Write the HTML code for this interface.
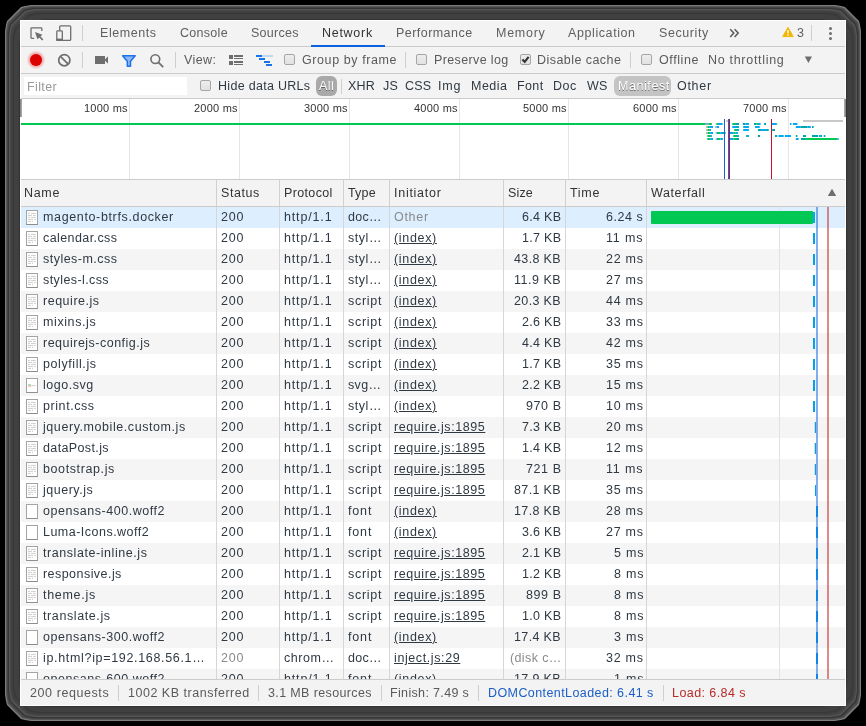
<!DOCTYPE html><html><head><meta charset="utf-8"><style>
html,body{margin:0;padding:0;width:866px;height:726px;overflow:hidden;background:#000;}
body{position:relative;font-family:"Liberation Sans",sans-serif;}
.r{position:absolute;}
.t{position:absolute;white-space:nowrap;will-change:transform;font-family:"Liberation Sans",sans-serif;}
#content{position:absolute;left:20px;top:20px;width:824px;height:684px;background:#f3f3f3;border:1px solid #fff;}
.cb{position:absolute;width:9px;height:9px;border:1px solid #a6a6a6;border-radius:2px;background:linear-gradient(#ededed,#e2e2e2);}
.fi{position:absolute;width:10px;height:13px;border:1px solid #a4a4a4;border-bottom-color:#8e8e8e;background:#fff;}
#grid{position:absolute;left:0;top:0;width:866px;height:679px;clip-path:inset(207px 20px 0 20px);}
</style></head><body><svg class="r" style="left:0;top:0" width="866" height="726"><polygon fill="#7d7d7d" points="31,5 835,5 841,6 845,7 859,21 860,25 861,31 861,695 860,701 859,705 845,719 841,720 835,721 31,721 25,720 21,719 7,705 6,701 5,695 5,31 6,25 7,21 21,7 25,6"/><polygon fill="#555555" points="32,6 834,6 840,7 844,8 858,22 859,26 860,32 860,694 859,700 858,704 844,718 840,719 834,720 32,720 26,719 22,718 8,704 7,700 6,694 6,32 7,26 8,22 22,8 26,7"/><polygon fill="#444444" points="33,7 833,7 839,8 843,9 857,23 858,27 859,33 859,693 858,699 857,703 843,717 839,718 833,719 33,719 27,718 23,717 9,703 8,699 7,693 7,33 8,27 9,23 23,9 27,8"/><polygon fill="#363636" points="34,8 832,8 838,9 842,10 856,24 857,28 858,34 858,692 857,698 856,702 842,716 838,717 832,718 34,718 28,717 24,716 10,702 9,698 8,692 8,34 9,28 10,24 24,10 28,9"/><polygon fill="#555555" points="35,9 831,9 837,10 841,11 855,25 856,29 857,35 857,691 856,697 855,701 841,715 837,716 831,717 35,717 29,716 25,715 11,701 10,697 9,691 9,35 10,29 11,25 25,11 29,10"/><polygon fill="#484848" points="36,10 830,10 836,11 840,12 854,26 855,30 856,36 856,690 855,696 854,700 840,714 836,715 830,716 36,716 30,715 26,714 12,700 11,696 10,690 10,36 11,30 12,26 26,12 30,11"/><polygon fill="#424242" points="37,11 829,11 835,12 839,13 853,27 854,31 855,37 855,689 854,695 853,699 839,713 835,714 829,715 37,715 31,714 27,713 13,699 12,695 11,689 11,37 12,31 13,27 27,13 31,12"/><polygon fill="#3e3e3e" points="38,12 828,12 834,13 838,14 852,28 853,32 854,38 854,688 853,694 852,698 838,712 834,713 828,714 38,714 32,713 28,712 14,698 13,694 12,688 12,38 13,32 14,28 28,14 32,13"/><polygon fill="#383838" points="39,13 827,13 833,14 837,15 851,29 852,33 853,39 853,687 852,693 851,697 837,711 833,712 827,713 39,713 33,712 29,711 15,697 14,693 13,687 13,39 14,33 15,29 29,15 33,14"/><polygon fill="#404040" points="40,14 826,14 832,15 836,16 850,30 851,34 852,40 852,686 851,692 850,696 836,710 832,711 826,712 40,712 34,711 30,710 16,696 15,692 14,686 14,40 15,34 16,30 30,16 34,15"/><polygon fill="#404040" points="41,15 825,15 831,16 835,17 849,31 850,35 851,41 851,685 850,691 849,695 835,709 831,710 825,711 41,711 35,710 31,709 17,695 16,691 15,685 15,41 16,35 17,31 31,17 35,16"/><polygon fill="#404040" points="42,16 824,16 830,17 834,18 848,32 849,36 850,42 850,684 849,690 848,694 834,708 830,709 824,710 42,710 36,709 32,708 18,694 17,690 16,684 16,42 17,36 18,32 32,18 36,17"/><polygon fill="#404040" points="43,17 823,17 829,18 833,19 847,33 848,37 849,43 849,683 848,689 847,693 833,707 829,708 823,709 43,709 37,708 33,707 19,693 18,689 17,683 17,43 18,37 19,33 33,19 37,18"/><polygon fill="#3e3e3e" points="44,18 822,18 828,19 832,20 846,34 847,38 848,44 848,682 847,688 846,692 832,706 828,707 822,708 44,708 38,707 34,706 20,692 19,688 18,682 18,44 19,38 20,34 34,20 38,19"/><polygon fill="#333333" points="45,19 821,19 827,20 831,21 845,35 846,39 847,45 847,681 846,687 845,691 831,705 827,706 821,707 45,707 39,706 35,705 21,691 20,687 19,681 19,45 20,39 21,35 35,21 39,20"/></svg>
<div id="content"></div>
<div class="r" style="left:21px;top:46px;width:824px;height:1px;background:#cbcbcb;"></div>
<div class="r" style="left:82px;top:25px;width:1px;height:16px;background:#cfcfcf;"></div>
<div class="t" style="top:26.17px;font-size:12.5px;line-height:15px;letter-spacing:0.548px;color:#5f5f5f;left:100.00px;">Elements</div>
<div class="t" style="top:26.17px;font-size:12.5px;line-height:15px;letter-spacing:0.297px;color:#5f5f5f;left:180.00px;">Console</div>
<div class="t" style="top:26.17px;font-size:12.5px;line-height:15px;letter-spacing:0.272px;color:#5f5f5f;left:251.00px;">Sources</div>
<div class="t" style="top:26.17px;font-size:12.5px;line-height:15px;letter-spacing:0.714px;color:#333333;left:322.00px;">Network</div>
<div class="t" style="top:26.17px;font-size:12.5px;line-height:15px;letter-spacing:0.453px;color:#5f5f5f;left:396.00px;">Performance</div>
<div class="t" style="top:26.17px;font-size:12.5px;line-height:15px;letter-spacing:0.738px;color:#5f5f5f;left:496.00px;">Memory</div>
<div class="t" style="top:26.17px;font-size:12.5px;line-height:15px;letter-spacing:0.590px;color:#5f5f5f;left:568.00px;">Application</div>
<div class="t" style="top:26.17px;font-size:12.5px;line-height:15px;letter-spacing:0.592px;color:#5f5f5f;left:659.00px;">Security</div>
<div class="r" style="left:311px;top:45px;width:74px;height:2px;background:#0b61df;"></div>
<div class="t" style="top:26.17px;font-size:12.5px;line-height:15px;letter-spacing:0.150px;color:#5f5f5f;left:797.00px;">3</div>
<div class="r" style="left:811px;top:25px;width:1px;height:16px;background:#cfcfcf;"></div>
<div class="r" style="left:829.0px;top:26.9px;width:3.2px;height:3.2px;border-radius:50%;background:#6e6e6e"></div>
<div class="r" style="left:829.0px;top:31.9px;width:3.2px;height:3.2px;border-radius:50%;background:#6e6e6e"></div>
<div class="r" style="left:829.0px;top:36.9px;width:3.2px;height:3.2px;border-radius:50%;background:#6e6e6e"></div>
<div class="r" style="left:21px;top:73px;width:824px;height:1px;background:#cbcbcb;"></div>
<svg class="r" style="left:26px;top:50px" width="20" height="20" viewBox="0 0 20 20"><defs><radialGradient id="rg"><stop offset="0.6" stop-color="#e33" stop-opacity=".45"/><stop offset="1" stop-color="#e33" stop-opacity="0"/></radialGradient></defs><circle cx="10" cy="9.9" r="9.5" fill="url(#rg)"/><circle cx="10" cy="9.9" r="6" fill="#dc0000"/></svg>
<div class="r" style="left:82px;top:52px;width:1px;height:16px;background:#cfcfcf;"></div>
<div class="r" style="left:175px;top:52px;width:1px;height:16px;background:#cfcfcf;"></div>
<div class="t" style="top:53.17px;font-size:12.5px;line-height:15px;letter-spacing:0.380px;color:#5a5a5a;left:184.00px;">View:</div>
<div class="cb" style="left:284px;top:54px"></div>
<div class="t" style="top:53.17px;font-size:12.5px;line-height:15px;letter-spacing:0.590px;color:#5a5a5a;left:301.50px;">Group by frame</div>
<div class="r" style="left:405px;top:52px;width:1px;height:16px;background:#cfcfcf;"></div>
<div class="cb" style="left:416px;top:54px"></div>
<div class="t" style="top:53.17px;font-size:12.5px;line-height:15px;letter-spacing:0.374px;color:#5a5a5a;left:433.60px;">Preserve log</div>
<div class="cb" style="left:520px;top:54px"></div><svg class="r" style="left:520px;top:54px" width="11" height="11" viewBox="0 0 11 11"><path d="M2.4 5.5l2.3 2.3 3.9-5" fill="none" stroke="#333" stroke-width="2.1"/></svg>
<div class="t" style="top:53.17px;font-size:12.5px;line-height:15px;letter-spacing:0.447px;color:#5a5a5a;left:537.00px;">Disable cache</div>
<div class="r" style="left:630px;top:52px;width:1px;height:16px;background:#cfcfcf;"></div>
<div class="cb" style="left:641px;top:54px"></div>
<div class="t" style="top:53.17px;font-size:12.5px;line-height:15px;letter-spacing:0.582px;color:#5a5a5a;left:658.70px;">Offline</div>
<div class="t" style="top:53.17px;font-size:12.5px;line-height:15px;letter-spacing:0.698px;color:#5a5a5a;left:708.20px;">No throttling</div>
<svg class="r" style="left:0;top:0" width="866" height="100" viewBox="0 0 866 100">
<path d="M34.2 38.3H31.6a0.6 0.6 0 0 1-0.6-0.6V28.5a0.6 0.6 0 0 1 0.6-0.6h9.6a0.6 0.6 0 0 1 0.6 0.6v2.6" fill="none" stroke="#6e6e6e" stroke-width="1.3"/>
<path d="M35.1 32.1L42.4 34.8 37.3 39.3z" fill="#6e6e6e"/><path d="M39 36.2L42.8 40" stroke="#6e6e6e" stroke-width="1.7"/>
<path d="M59.7 30.4V26.8a1 1 0 0 1 1-1h9a1 1 0 0 1 1 1V39.4a1 1 0 0 1-1 1H62.3" fill="none" stroke="#6e6e6e" stroke-width="1.3"/>
<rect x="56.8" y="30.9" width="5.5" height="9.5" rx="0.8" fill="none" stroke="#6e6e6e" stroke-width="1.3"/>
<rect x="56.2" y="38.6" width="6.6" height="2.3" fill="#6e6e6e"/>
<path d="M730.2 29.3l3.6 3.8-3.6 3.8M734.6 29.3l3.6 3.8-3.6 3.8" fill="none" stroke="#5a5a5a" stroke-width="1.5"/>
<path d="M788 27.3L793.3 36.6H782.7z" fill="#f2b600" stroke="#f2b600" stroke-width="0.9" stroke-linejoin="round"/>
<rect x="787.3" y="30" width="1.4" height="3.4" fill="#fff"/><rect x="787.3" y="34.2" width="1.4" height="1.4" fill="#fff"/>
<circle cx="64.3" cy="60.2" r="5.6" fill="none" stroke="#6e6e6e" stroke-width="1.7"/><path d="M60.4 56.3l7.8 7.8" stroke="#6e6e6e" stroke-width="1.7"/>
<rect x="95" y="56" width="10" height="8" fill="#6e6e6e"/><path d="M104.5 60L108 56.2V63.8z" fill="#6e6e6e"/>
<path d="M122.6 55.8h12.6L130.5 61.2v5H127.3v-5z" fill="#8fb6f5" stroke="#1a73e8" stroke-width="1.5" stroke-linejoin="round"/>
<circle cx="155.3" cy="59.1" r="4.4" fill="none" stroke="#6e6e6e" stroke-width="1.6"/><path d="M158.4 62.4l4.8 4.8" stroke="#6e6e6e" stroke-width="1.8"/>
<rect x="229" y="55" width="4" height="4" fill="#6e6e6e"/><rect x="229" y="61" width="4" height="4" fill="#6e6e6e"/>
<rect x="234" y="55" width="9" height="2" fill="#6e6e6e"/><rect x="234" y="58" width="9" height="1" fill="#6e6e6e"/>
<rect x="234" y="61" width="9" height="2" fill="#6e6e6e"/><rect x="234" y="64" width="9" height="1" fill="#6e6e6e"/>
<rect x="256" y="55" width="6" height="2" fill="#1a73e8"/><rect x="262" y="55" width="11" height="2" fill="#c3d7f3"/>
<rect x="259" y="58" width="6" height="2" fill="#1a73e8"/><rect x="264" y="61" width="6" height="2" fill="#1a73e8"/>
<rect x="266" y="64" width="6" height="2" fill="#1a73e8"/>
<path d="M804.8 56.5h7.2L808.4 63z" fill="#6e6e6e"/>
</svg>
<div class="r" style="left:21px;top:98px;width:824px;height:1px;background:#cbcbcb;"></div>
<div class="r" style="left:24px;top:77px;width:163px;height:18px;background:#ffffff;"></div>
<div class="t" style="top:80.17px;font-size:12.5px;line-height:15px;letter-spacing:0.389px;color:#9a9a9a;left:26.70px;">Filter</div>
<div class="cb" style="left:200px;top:80px"></div>
<div class="t" style="top:79.17px;font-size:12.5px;line-height:15px;letter-spacing:0.298px;color:#303942;left:217.70px;">Hide data URLs</div>
<div class="r" style="left:316px;top:76px;width:21px;height:20px;border-radius:6px;background:#a9a9a9"></div>
<div class="t" style="top:79.17px;font-size:12.5px;line-height:15px;letter-spacing:0.483px;color:#ffffff;left:318.50px;text-shadow:0 1px 0 rgba(0,0,0,.45);">All</div>
<div class="r" style="left:341px;top:79px;width:1px;height:15px;background:#cfcfcf;"></div>
<div class="t" style="top:79.17px;font-size:12.5px;line-height:15px;letter-spacing:0.150px;color:#303942;left:348.40px;">XHR</div>
<div class="t" style="top:79.17px;font-size:12.5px;line-height:15px;letter-spacing:0.150px;color:#303942;left:383.00px;">JS</div>
<div class="t" style="top:79.17px;font-size:12.5px;line-height:15px;letter-spacing:0.150px;color:#303942;left:404.70px;">CSS</div>
<div class="t" style="top:79.17px;font-size:12.5px;line-height:15px;letter-spacing:0.850px;color:#303942;left:438.30px;">Img</div>
<div class="t" style="top:79.17px;font-size:12.5px;line-height:15px;letter-spacing:0.505px;color:#303942;left:471.40px;">Media</div>
<div class="t" style="top:79.17px;font-size:12.5px;line-height:15px;letter-spacing:0.377px;color:#303942;left:517.10px;">Font</div>
<div class="t" style="top:79.17px;font-size:12.5px;line-height:15px;letter-spacing:0.472px;color:#303942;left:553.30px;">Doc</div>
<div class="t" style="top:79.17px;font-size:12.5px;line-height:15px;letter-spacing:0.150px;color:#303942;left:586.50px;">WS</div>
<div class="t" style="top:79.17px;font-size:12.5px;line-height:15px;letter-spacing:0.708px;color:#303942;left:677.20px;">Other</div>
<div class="r" style="left:614px;top:76px;width:57px;height:20px;border-radius:6px;background:#c4c4c4"></div>
<div class="t" style="top:79.17px;font-size:12.5px;line-height:15px;letter-spacing:0.569px;color:#ffffff;left:617.50px;text-shadow:0 1px 0 rgba(0,0,0,.45);">Manifest</div>
<div class="r" style="left:21px;top:99px;width:824px;height:80px;background:#ffffff;"></div>
<div class="r" style="left:21px;top:179px;width:824px;height:1px;background:#cbcbcb;"></div>
<div class="r" style="left:129px;top:99px;width:1px;height:80px;background:#e6e6e6;"></div>
<div class="t" style="top:101.69px;font-size:11px;line-height:13px;letter-spacing:0.227px;color:#333333;right:738.27px;">1000 ms</div>
<div class="r" style="left:239px;top:99px;width:1px;height:80px;background:#e6e6e6;"></div>
<div class="t" style="top:101.69px;font-size:11px;line-height:13px;letter-spacing:0.227px;color:#333333;right:628.27px;">2000 ms</div>
<div class="r" style="left:349px;top:99px;width:1px;height:80px;background:#e6e6e6;"></div>
<div class="t" style="top:101.69px;font-size:11px;line-height:13px;letter-spacing:0.227px;color:#333333;right:518.27px;">3000 ms</div>
<div class="r" style="left:459px;top:99px;width:1px;height:80px;background:#e6e6e6;"></div>
<div class="t" style="top:101.69px;font-size:11px;line-height:13px;letter-spacing:0.227px;color:#333333;right:408.27px;">4000 ms</div>
<div class="r" style="left:568px;top:99px;width:1px;height:80px;background:#e6e6e6;"></div>
<div class="t" style="top:101.69px;font-size:11px;line-height:13px;letter-spacing:0.227px;color:#333333;right:299.27px;">5000 ms</div>
<div class="r" style="left:678px;top:99px;width:1px;height:80px;background:#e6e6e6;"></div>
<div class="t" style="top:101.69px;font-size:11px;line-height:13px;letter-spacing:0.227px;color:#333333;right:189.27px;">6000 ms</div>
<div class="r" style="left:788px;top:99px;width:1px;height:80px;background:#e6e6e6;"></div>
<div class="t" style="top:101.69px;font-size:11px;line-height:13px;letter-spacing:0.227px;color:#333333;right:79.27px;">7000 ms</div>
<div class="r" style="left:20px;top:99px;width:1px;height:18px;background:#8c8c8c;"></div>
<div class="r" style="left:21px;top:99px;width:1px;height:18px;background:#a4a4a4;"></div>
<div class="r" style="left:21px;top:123px;width:685px;height:2px;background:#00c853;"></div>
<svg class="r" style="left:0;top:0" width="866" height="180" viewBox="0 0 866 180"><rect x="705" y="123" width="3.8" height="2" fill="#6fb5bd"/><rect x="708.8" y="123" width="3" height="2" fill="#00c853"/><rect x="715.7" y="123" width="0.9" height="2" fill="#b0b0b0"/><rect x="716.6" y="123" width="1.4" height="2" fill="#00c853"/><rect x="718" y="123" width="4.6" height="2" fill="#03a9f4"/><rect x="732.3" y="123" width="2.8" height="2" fill="#00c853"/><rect x="735.1" y="123" width="3.9" height="2" fill="#00a5a8"/><rect x="742.8" y="123" width="2.6" height="2" fill="#00a5a8"/><rect x="745.4" y="123" width="3.5" height="2" fill="#03a9f4"/><rect x="754" y="123" width="2.5" height="2" fill="#00a5a8"/><rect x="756.5" y="123" width="1.4" height="2" fill="#00c853"/><rect x="757.9" y="123" width="2.7" height="2" fill="#03a9f4"/><rect x="764.1" y="123" width="1.9" height="2" fill="#00a5a8"/><rect x="772" y="123" width="4.6" height="2" fill="#03a9f4"/><rect x="776.6" y="123" width="0.6" height="2" fill="#00a5a8"/><rect x="789.9" y="123" width="1.6" height="2" fill="#03a9f4"/><rect x="793" y="123" width="4.4" height="2" fill="#03a9f4"/><rect x="706.2" y="126" width="1.2" height="2" fill="#b0b0b0"/><rect x="707.4" y="126" width="1.8" height="2" fill="#00c853"/><rect x="709.2" y="126" width="3.8" height="2" fill="#03a9f4"/><rect x="715.2" y="126" width="1.4" height="2" fill="#b0b0b0"/><rect x="716.6" y="126" width="2.4" height="2" fill="#03a9f4"/><rect x="732.3" y="126" width="3.7" height="2" fill="#03a9f4"/><rect x="736" y="126" width="1" height="2" fill="#00c853"/><rect x="737" y="126" width="2" height="2" fill="#03a9f4"/><rect x="743" y="126" width="0.6" height="2" fill="#00c853"/><rect x="743.6" y="126" width="5.3" height="2" fill="#03a9f4"/><rect x="755" y="126" width="4.7" height="2" fill="#03a9f4"/><rect x="795.8" y="126" width="4.5" height="2" fill="#03a9f4"/><rect x="800.3" y="126" width="7.2" height="2" fill="#00a5a8"/><rect x="807.5" y="126" width="3.3" height="2" fill="#03a9f4"/><rect x="812" y="126" width="1.6" height="2" fill="#00a5a8"/><rect x="706.2" y="129" width="1.4" height="2" fill="#b0b0b0"/><rect x="707.6" y="129" width="2.1" height="2" fill="#00c853"/><rect x="709.7" y="129" width="1.2" height="2" fill="#00a5a8"/><rect x="734.2" y="129" width="2.8" height="2" fill="#00c853"/><rect x="737" y="129" width="2" height="2" fill="#03a9f4"/><rect x="743" y="129" width="0.6" height="2" fill="#00c853"/><rect x="743.6" y="129" width="5.3" height="2" fill="#03a9f4"/><rect x="757.9" y="129" width="3.2" height="2" fill="#00a5a8"/><rect x="761.1" y="129" width="5.1" height="2" fill="#03a9f4"/><rect x="766.2" y="129" width="2.5" height="2" fill="#00a5a8"/><rect x="772.2" y="129" width="2.8" height="2" fill="#00a5a8"/><rect x="706.2" y="132" width="1.4" height="2" fill="#b0b0b0"/><rect x="707.6" y="132" width="2.6" height="2" fill="#00c853"/><rect x="710.2" y="132" width="2.8" height="2" fill="#03a9f4"/><rect x="715.7" y="132" width="1.2" height="2" fill="#b0b0b0"/><rect x="716.9" y="132" width="1.1" height="2" fill="#03a9f4"/><rect x="718" y="132" width="2.3" height="2" fill="#00c853"/><rect x="720.3" y="132" width="2.8" height="2" fill="#03a9f4"/><rect x="723.1" y="132" width="2.5" height="2" fill="#00a5a8"/><rect x="730" y="132" width="3.3" height="2" fill="#03a9f4"/><rect x="733.3" y="132" width="2.3" height="2" fill="#00c853"/><rect x="735.6" y="132" width="2.3" height="2" fill="#03a9f4"/><rect x="706.9" y="135" width="0.7" height="2" fill="#b0b0b0"/><rect x="707.6" y="135" width="2.6" height="2" fill="#00c853"/><rect x="710.2" y="135" width="1.6" height="2" fill="#00a5a8"/><rect x="733.3" y="135" width="3.7" height="2" fill="#00c853"/><rect x="737" y="135" width="2" height="2" fill="#03a9f4"/><rect x="746.1" y="135" width="0.9" height="2" fill="#00c853"/><rect x="747" y="135" width="1.9" height="2" fill="#03a9f4"/><rect x="757.9" y="135" width="2.1" height="2" fill="#00a5a8"/><rect x="775" y="135" width="2.2" height="2" fill="#00a5a8"/><rect x="778.4" y="135" width="5.3" height="2" fill="#03a9f4"/><rect x="784.9" y="135" width="6.1" height="2" fill="#03a9f4"/><rect x="795.8" y="135" width="1.6" height="2" fill="#00a5a8"/><rect x="803" y="135" width="3" height="2" fill="#00a5a8"/><rect x="812" y="135" width="6" height="2" fill="#00a5a8"/><rect x="818.8" y="135" width="3.2" height="2" fill="#03a9f4"/><rect x="823.7" y="135" width="1.6" height="2" fill="#00a5a8"/><rect x="706.7" y="138" width="0.9" height="2" fill="#b0b0b0"/><rect x="707.6" y="138" width="3" height="2" fill="#00c853"/><rect x="710.6" y="138" width="2.4" height="2" fill="#03a9f4"/><rect x="715.7" y="138" width="1.2" height="2" fill="#b0b0b0"/><rect x="716.9" y="138" width="1.1" height="2" fill="#03a9f4"/><rect x="718" y="138" width="2.3" height="2" fill="#00c853"/><rect x="720.3" y="138" width="2.6" height="2" fill="#03a9f4"/><rect x="730" y="138" width="3.3" height="2" fill="#03a9f4"/><rect x="733.3" y="138" width="2.7" height="2" fill="#00c853"/><rect x="736" y="138" width="3" height="2" fill="#00a5a8"/><rect x="795.8" y="138" width="2.8" height="2" fill="#03a9f4"/><rect x="801" y="138" width="4" height="2" fill="#00a5a8"/><rect x="805" y="138" width="32.4" height="2" fill="#00c853"/><rect x="837.4" y="138" width="1.3" height="2" fill="#03a9f4"/></svg>
<div class="r" style="left:726px;top:120px;width:2px;height:2px;background:#c8c8c8;"></div>
<div class="r" style="left:724px;top:119px;width:1px;height:60px;background:#1565d8;"></div>
<div class="r" style="left:728px;top:119px;width:1px;height:60px;background:#1565d8;"></div>
<div class="r" style="left:729px;top:119px;width:1px;height:60px;background:#c8102e;"></div>
<div class="r" style="left:771px;top:119px;width:1px;height:60px;background:#c8102e;"></div>
<div class="r" style="left:803px;top:120px;width:40px;height:2px;background:#c8c8c8;"></div>
<div class="r" style="left:844px;top:99px;width:1px;height:18px;background:#a4a4a4;"></div>
<div class="r" style="left:845px;top:99px;width:1px;height:18px;background:#8c8c8c;"></div>
<div class="r" style="left:21px;top:180px;width:824px;height:26px;background:#f3f3f3;"></div>
<div class="r" style="left:21px;top:206px;width:824px;height:1px;background:#cbcbcb;"></div>
<div class="r" style="left:216px;top:180px;width:1px;height:26px;background:#d0d0d0;"></div>
<div class="r" style="left:279px;top:180px;width:1px;height:26px;background:#d0d0d0;"></div>
<div class="r" style="left:343px;top:180px;width:1px;height:26px;background:#d0d0d0;"></div>
<div class="r" style="left:389px;top:180px;width:1px;height:26px;background:#d0d0d0;"></div>
<div class="r" style="left:503px;top:180px;width:1px;height:26px;background:#d0d0d0;"></div>
<div class="r" style="left:565px;top:180px;width:1px;height:26px;background:#d0d0d0;"></div>
<div class="r" style="left:646px;top:180px;width:1px;height:26px;background:#d0d0d0;"></div>
<div class="t" style="top:186.17px;font-size:12.5px;line-height:15px;letter-spacing:0.693px;color:#333333;left:23.60px;">Name</div>
<div class="t" style="top:186.17px;font-size:12.5px;line-height:15px;letter-spacing:0.563px;color:#333333;left:221.00px;">Status</div>
<div class="t" style="top:186.17px;font-size:12.5px;line-height:15px;letter-spacing:0.358px;color:#333333;left:284.00px;">Protocol</div>
<div class="t" style="top:186.17px;font-size:12.5px;line-height:15px;letter-spacing:0.160px;color:#333333;left:348.00px;">Type</div>
<div class="t" style="top:186.17px;font-size:12.5px;line-height:15px;letter-spacing:0.734px;color:#333333;left:394.00px;">Initiator</div>
<div class="t" style="top:186.17px;font-size:12.5px;line-height:15px;letter-spacing:0.150px;color:#333333;left:508.00px;">Size</div>
<div class="t" style="top:186.17px;font-size:12.5px;line-height:15px;letter-spacing:0.682px;color:#333333;left:570.00px;">Time</div>
<div class="t" style="top:186.17px;font-size:12.5px;line-height:15px;letter-spacing:0.608px;color:#333333;left:651.00px;">Waterfall</div>
<svg class="r" style="left:827px;top:188px" width="10" height="9" viewBox="0 0 10 9"><path d="M5 0.8L9.2 8H0.8z" fill="#6e6e6e"/></svg>
<div id="grid">
<div class="r" style="left:21px;top:207px;width:824px;height:21px;background:#ddeeff;"></div>
<div class="r" style="left:21px;top:228px;width:824px;height:21px;background:#ffffff;"></div>
<div class="r" style="left:21px;top:249px;width:824px;height:21px;background:#f5f5f5;"></div>
<div class="r" style="left:21px;top:270px;width:824px;height:21px;background:#ffffff;"></div>
<div class="r" style="left:21px;top:291px;width:824px;height:21px;background:#f5f5f5;"></div>
<div class="r" style="left:21px;top:312px;width:824px;height:21px;background:#ffffff;"></div>
<div class="r" style="left:21px;top:333px;width:824px;height:21px;background:#f5f5f5;"></div>
<div class="r" style="left:21px;top:354px;width:824px;height:21px;background:#ffffff;"></div>
<div class="r" style="left:21px;top:375px;width:824px;height:21px;background:#f5f5f5;"></div>
<div class="r" style="left:21px;top:396px;width:824px;height:21px;background:#ffffff;"></div>
<div class="r" style="left:21px;top:417px;width:824px;height:21px;background:#f5f5f5;"></div>
<div class="r" style="left:21px;top:438px;width:824px;height:21px;background:#ffffff;"></div>
<div class="r" style="left:21px;top:459px;width:824px;height:21px;background:#f5f5f5;"></div>
<div class="r" style="left:21px;top:480px;width:824px;height:21px;background:#ffffff;"></div>
<div class="r" style="left:21px;top:501px;width:824px;height:21px;background:#f5f5f5;"></div>
<div class="r" style="left:21px;top:522px;width:824px;height:21px;background:#ffffff;"></div>
<div class="r" style="left:21px;top:543px;width:824px;height:21px;background:#f5f5f5;"></div>
<div class="r" style="left:21px;top:564px;width:824px;height:21px;background:#ffffff;"></div>
<div class="r" style="left:21px;top:585px;width:824px;height:21px;background:#f5f5f5;"></div>
<div class="r" style="left:21px;top:606px;width:824px;height:21px;background:#ffffff;"></div>
<div class="r" style="left:21px;top:627px;width:824px;height:21px;background:#f5f5f5;"></div>
<div class="r" style="left:21px;top:648px;width:824px;height:21px;background:#ffffff;"></div>
<div class="r" style="left:21px;top:669px;width:824px;height:21px;background:#f5f5f5;"></div>
<div class="r" style="left:216px;top:207px;width:1px;height:472px;background:#d6d6d6;"></div>
<div class="r" style="left:279px;top:207px;width:1px;height:472px;background:#d6d6d6;"></div>
<div class="r" style="left:343px;top:207px;width:1px;height:472px;background:#d6d6d6;"></div>
<div class="r" style="left:389px;top:207px;width:1px;height:472px;background:#d6d6d6;"></div>
<div class="r" style="left:503px;top:207px;width:1px;height:472px;background:#d6d6d6;"></div>
<div class="r" style="left:565px;top:207px;width:1px;height:472px;background:#d6d6d6;"></div>
<div class="r" style="left:646px;top:207px;width:1px;height:472px;background:#d6d6d6;"></div>
<div class="r" style="left:779px;top:207px;width:1px;height:472px;background:#e2e2e2;"></div>
<div class="fi" style="left:26px;top:210px"></div>
<svg class="r" style="left:26px;top:210px" width="12" height="15" viewBox="0 0 12 15"><path d="M2 3.4h2M5 3.4h4.8M2 5.4h4M7 5.4h2.8M2 7.4h2M5 7.4h4.8M2 9.4h5M8 9.4h1.8M2 11.4h3M6 11.4h1" stroke="#cdcdcd" stroke-width="1"/></svg>
<div class="t" style="top:210.17px;font-size:12.5px;line-height:15px;letter-spacing:0.639px;color:#303942;left:42.60px;">magento-btrfs.docker</div>
<div class="t" style="top:210.17px;font-size:12.5px;line-height:15px;letter-spacing:0.850px;color:#303942;left:221.00px;">200</div>
<div class="t" style="top:210.17px;font-size:12.5px;line-height:15px;letter-spacing:0.850px;color:#303942;left:283.50px;">http/1.1</div>
<div class="t" style="top:210.17px;font-size:12.5px;line-height:15px;letter-spacing:0.303px;color:#303942;left:348.00px;">doc…</div>
<div class="t" style="top:210.17px;font-size:12.5px;line-height:15px;letter-spacing:0.708px;color:#8a8a8a;left:394.00px;">Other</div>
<div class="t" style="top:210.17px;font-size:12.5px;line-height:15px;letter-spacing:0.298px;color:#303942;right:304.70px;">6.4 KB</div>
<div class="t" style="top:210.17px;font-size:12.5px;line-height:15px;letter-spacing:0.550px;color:#303942;right:222.45px;">6.24 s</div>
<div class="r" style="left:651px;top:211px;width:162px;height:13px;background:#00c853;border-radius:1px;"></div>
<div class="r" style="left:813px;top:212px;width:1.5px;height:11px;background:#03a9f4;"></div>
<div class="fi" style="left:26px;top:231px"></div>
<svg class="r" style="left:26px;top:231px" width="12" height="15" viewBox="0 0 12 15"><path d="M2 3.4h2M5 3.4h4.8M2 5.4h4M7 5.4h2.8M2 7.4h2M5 7.4h4.8M2 9.4h5M8 9.4h1.8M2 11.4h3M6 11.4h1" stroke="#cdcdcd" stroke-width="1"/></svg>
<div class="t" style="top:231.17px;font-size:12.5px;line-height:15px;letter-spacing:0.412px;color:#303942;left:42.60px;">calendar.css</div>
<div class="t" style="top:231.17px;font-size:12.5px;line-height:15px;letter-spacing:0.850px;color:#303942;left:221.00px;">200</div>
<div class="t" style="top:231.17px;font-size:12.5px;line-height:15px;letter-spacing:0.850px;color:#303942;left:283.50px;">http/1.1</div>
<div class="t" style="top:231.17px;font-size:12.5px;line-height:15px;letter-spacing:0.535px;color:#303942;left:348.00px;">styl…</div>
<div class="t" style="top:231.17px;font-size:12.5px;line-height:15px;letter-spacing:0.672px;color:#303942;left:394.00px;text-decoration:underline;">(index)</div>
<div class="t" style="top:231.17px;font-size:12.5px;line-height:15px;letter-spacing:0.298px;color:#303942;right:304.70px;">1.7 KB</div>
<div class="t" style="top:231.17px;font-size:12.5px;line-height:15px;letter-spacing:0.850px;color:#303942;right:222.15px;">11 ms</div>
<div class="r" style="left:812.5px;top:233px;width:0.8px;height:11px;background:#d8d8d8;"></div>
<div class="r" style="left:813.3px;top:233px;width:2.2px;height:11px;background:#03a0f0;"></div>
<div class="fi" style="left:26px;top:252px"></div>
<svg class="r" style="left:26px;top:252px" width="12" height="15" viewBox="0 0 12 15"><path d="M2 3.4h2M5 3.4h4.8M2 5.4h4M7 5.4h2.8M2 7.4h2M5 7.4h4.8M2 9.4h5M8 9.4h1.8M2 11.4h3M6 11.4h1" stroke="#cdcdcd" stroke-width="1"/></svg>
<div class="t" style="top:252.17px;font-size:12.5px;line-height:15px;letter-spacing:0.473px;color:#303942;left:42.60px;">styles-m.css</div>
<div class="t" style="top:252.17px;font-size:12.5px;line-height:15px;letter-spacing:0.850px;color:#303942;left:221.00px;">200</div>
<div class="t" style="top:252.17px;font-size:12.5px;line-height:15px;letter-spacing:0.850px;color:#303942;left:283.50px;">http/1.1</div>
<div class="t" style="top:252.17px;font-size:12.5px;line-height:15px;letter-spacing:0.535px;color:#303942;left:348.00px;">styl…</div>
<div class="t" style="top:252.17px;font-size:12.5px;line-height:15px;letter-spacing:0.672px;color:#303942;left:394.00px;text-decoration:underline;">(index)</div>
<div class="t" style="top:252.17px;font-size:12.5px;line-height:15px;letter-spacing:0.364px;color:#303942;right:304.64px;">43.8 KB</div>
<div class="t" style="top:252.17px;font-size:12.5px;line-height:15px;letter-spacing:0.749px;color:#303942;right:222.25px;">22 ms</div>
<div class="r" style="left:812.5px;top:254px;width:0.8px;height:11px;background:#d8d8d8;"></div>
<div class="r" style="left:813.3px;top:254px;width:2.2px;height:11px;background:#03a0f0;"></div>
<div class="fi" style="left:26px;top:273px"></div>
<svg class="r" style="left:26px;top:273px" width="12" height="15" viewBox="0 0 12 15"><path d="M2 3.4h2M5 3.4h4.8M2 5.4h4M7 5.4h2.8M2 7.4h2M5 7.4h4.8M2 9.4h5M8 9.4h1.8M2 11.4h3M6 11.4h1" stroke="#cdcdcd" stroke-width="1"/></svg>
<div class="t" style="top:273.17px;font-size:12.5px;line-height:15px;letter-spacing:0.407px;color:#303942;left:42.60px;">styles-l.css</div>
<div class="t" style="top:273.17px;font-size:12.5px;line-height:15px;letter-spacing:0.850px;color:#303942;left:221.00px;">200</div>
<div class="t" style="top:273.17px;font-size:12.5px;line-height:15px;letter-spacing:0.850px;color:#303942;left:283.50px;">http/1.1</div>
<div class="t" style="top:273.17px;font-size:12.5px;line-height:15px;letter-spacing:0.535px;color:#303942;left:348.00px;">styl…</div>
<div class="t" style="top:273.17px;font-size:12.5px;line-height:15px;letter-spacing:0.672px;color:#303942;left:394.00px;text-decoration:underline;">(index)</div>
<div class="t" style="top:273.17px;font-size:12.5px;line-height:15px;letter-spacing:0.518px;color:#303942;right:304.48px;">11.9 KB</div>
<div class="t" style="top:273.17px;font-size:12.5px;line-height:15px;letter-spacing:0.749px;color:#303942;right:222.25px;">27 ms</div>
<div class="r" style="left:812.5px;top:275px;width:0.8px;height:11px;background:#d8d8d8;"></div>
<div class="r" style="left:813.3px;top:275px;width:2.2px;height:11px;background:#03a0f0;"></div>
<div class="fi" style="left:26px;top:294px"></div>
<svg class="r" style="left:26px;top:294px" width="12" height="15" viewBox="0 0 12 15"><path d="M2 3.4h2M5 3.4h4.8M2 5.4h4M7 5.4h2.8M2 7.4h2M5 7.4h4.8M2 9.4h5M8 9.4h1.8M2 11.4h3M6 11.4h1" stroke="#cdcdcd" stroke-width="1"/></svg>
<div class="t" style="top:294.17px;font-size:12.5px;line-height:15px;letter-spacing:0.519px;color:#303942;left:42.60px;">require.js</div>
<div class="t" style="top:294.17px;font-size:12.5px;line-height:15px;letter-spacing:0.850px;color:#303942;left:221.00px;">200</div>
<div class="t" style="top:294.17px;font-size:12.5px;line-height:15px;letter-spacing:0.850px;color:#303942;left:283.50px;">http/1.1</div>
<div class="t" style="top:294.17px;font-size:12.5px;line-height:15px;letter-spacing:0.715px;color:#303942;left:348.00px;">script</div>
<div class="t" style="top:294.17px;font-size:12.5px;line-height:15px;letter-spacing:0.672px;color:#303942;left:394.00px;text-decoration:underline;">(index)</div>
<div class="t" style="top:294.17px;font-size:12.5px;line-height:15px;letter-spacing:0.364px;color:#303942;right:304.64px;">20.3 KB</div>
<div class="t" style="top:294.17px;font-size:12.5px;line-height:15px;letter-spacing:0.749px;color:#303942;right:222.25px;">44 ms</div>
<div class="r" style="left:812.5px;top:296px;width:0.8px;height:11px;background:#d8d8d8;"></div>
<div class="r" style="left:813.3px;top:296px;width:2.2px;height:11px;background:#03a0f0;"></div>
<div class="fi" style="left:26px;top:315px"></div>
<svg class="r" style="left:26px;top:315px" width="12" height="15" viewBox="0 0 12 15"><path d="M2 3.4h2M5 3.4h4.8M2 5.4h4M7 5.4h2.8M2 7.4h2M5 7.4h4.8M2 9.4h5M8 9.4h1.8M2 11.4h3M6 11.4h1" stroke="#cdcdcd" stroke-width="1"/></svg>
<div class="t" style="top:315.17px;font-size:12.5px;line-height:15px;letter-spacing:0.598px;color:#303942;left:42.60px;">mixins.js</div>
<div class="t" style="top:315.17px;font-size:12.5px;line-height:15px;letter-spacing:0.850px;color:#303942;left:221.00px;">200</div>
<div class="t" style="top:315.17px;font-size:12.5px;line-height:15px;letter-spacing:0.850px;color:#303942;left:283.50px;">http/1.1</div>
<div class="t" style="top:315.17px;font-size:12.5px;line-height:15px;letter-spacing:0.715px;color:#303942;left:348.00px;">script</div>
<div class="t" style="top:315.17px;font-size:12.5px;line-height:15px;letter-spacing:0.672px;color:#303942;left:394.00px;text-decoration:underline;">(index)</div>
<div class="t" style="top:315.17px;font-size:12.5px;line-height:15px;letter-spacing:0.298px;color:#303942;right:304.70px;">2.6 KB</div>
<div class="t" style="top:315.17px;font-size:12.5px;line-height:15px;letter-spacing:0.749px;color:#303942;right:222.25px;">33 ms</div>
<div class="r" style="left:812.5px;top:317px;width:0.8px;height:11px;background:#d8d8d8;"></div>
<div class="r" style="left:813.3px;top:317px;width:2.2px;height:11px;background:#03a0f0;"></div>
<div class="fi" style="left:26px;top:336px"></div>
<svg class="r" style="left:26px;top:336px" width="12" height="15" viewBox="0 0 12 15"><path d="M2 3.4h2M5 3.4h4.8M2 5.4h4M7 5.4h2.8M2 7.4h2M5 7.4h4.8M2 9.4h5M8 9.4h1.8M2 11.4h3M6 11.4h1" stroke="#cdcdcd" stroke-width="1"/></svg>
<div class="t" style="top:336.17px;font-size:12.5px;line-height:15px;letter-spacing:0.487px;color:#303942;left:42.60px;">requirejs-config.js</div>
<div class="t" style="top:336.17px;font-size:12.5px;line-height:15px;letter-spacing:0.850px;color:#303942;left:221.00px;">200</div>
<div class="t" style="top:336.17px;font-size:12.5px;line-height:15px;letter-spacing:0.850px;color:#303942;left:283.50px;">http/1.1</div>
<div class="t" style="top:336.17px;font-size:12.5px;line-height:15px;letter-spacing:0.715px;color:#303942;left:348.00px;">script</div>
<div class="t" style="top:336.17px;font-size:12.5px;line-height:15px;letter-spacing:0.672px;color:#303942;left:394.00px;text-decoration:underline;">(index)</div>
<div class="t" style="top:336.17px;font-size:12.5px;line-height:15px;letter-spacing:0.298px;color:#303942;right:304.70px;">4.4 KB</div>
<div class="t" style="top:336.17px;font-size:12.5px;line-height:15px;letter-spacing:0.749px;color:#303942;right:222.25px;">42 ms</div>
<div class="r" style="left:812.5px;top:338px;width:0.8px;height:11px;background:#d8d8d8;"></div>
<div class="r" style="left:813.3px;top:338px;width:2.2px;height:11px;background:#03a0f0;"></div>
<div class="fi" style="left:26px;top:357px"></div>
<svg class="r" style="left:26px;top:357px" width="12" height="15" viewBox="0 0 12 15"><path d="M2 3.4h2M5 3.4h4.8M2 5.4h4M7 5.4h2.8M2 7.4h2M5 7.4h4.8M2 9.4h5M8 9.4h1.8M2 11.4h3M6 11.4h1" stroke="#cdcdcd" stroke-width="1"/></svg>
<div class="t" style="top:357.17px;font-size:12.5px;line-height:15px;letter-spacing:0.578px;color:#303942;left:42.60px;">polyfill.js</div>
<div class="t" style="top:357.17px;font-size:12.5px;line-height:15px;letter-spacing:0.850px;color:#303942;left:221.00px;">200</div>
<div class="t" style="top:357.17px;font-size:12.5px;line-height:15px;letter-spacing:0.850px;color:#303942;left:283.50px;">http/1.1</div>
<div class="t" style="top:357.17px;font-size:12.5px;line-height:15px;letter-spacing:0.715px;color:#303942;left:348.00px;">script</div>
<div class="t" style="top:357.17px;font-size:12.5px;line-height:15px;letter-spacing:0.672px;color:#303942;left:394.00px;text-decoration:underline;">(index)</div>
<div class="t" style="top:357.17px;font-size:12.5px;line-height:15px;letter-spacing:0.298px;color:#303942;right:304.70px;">1.7 KB</div>
<div class="t" style="top:357.17px;font-size:12.5px;line-height:15px;letter-spacing:0.749px;color:#303942;right:222.25px;">35 ms</div>
<div class="r" style="left:812.5px;top:359px;width:0.8px;height:11px;background:#d8d8d8;"></div>
<div class="r" style="left:813.3px;top:359px;width:2.2px;height:11px;background:#03a0f0;"></div>
<div class="fi" style="left:26px;top:378px"></div>
<svg class="r" style="left:26px;top:378px" width="12" height="15" viewBox="0 0 12 15"><rect x="2" y="6.2" width="1.4" height="1.4" fill="#8cc4f0"/><rect x="3.4" y="6.2" width="1.4" height="1.4" fill="#8fd08f"/><rect x="2" y="7.6" width="1.4" height="1.4" fill="#f5e08a"/><rect x="3.4" y="7.6" width="1.4" height="1.4" fill="#f0a090"/><path d="M5.4 7.6h2.2M8.2 7.6h1.4" stroke="#b8b8b8" stroke-width="0.8"/></svg>
<div class="t" style="top:378.17px;font-size:12.5px;line-height:15px;letter-spacing:0.526px;color:#303942;left:42.60px;">logo.svg</div>
<div class="t" style="top:378.17px;font-size:12.5px;line-height:15px;letter-spacing:0.850px;color:#303942;left:221.00px;">200</div>
<div class="t" style="top:378.17px;font-size:12.5px;line-height:15px;letter-spacing:0.850px;color:#303942;left:283.50px;">http/1.1</div>
<div class="t" style="top:378.17px;font-size:12.5px;line-height:15px;letter-spacing:0.344px;color:#303942;left:348.00px;">svg…</div>
<div class="t" style="top:378.17px;font-size:12.5px;line-height:15px;letter-spacing:0.672px;color:#303942;left:394.00px;text-decoration:underline;">(index)</div>
<div class="t" style="top:378.17px;font-size:12.5px;line-height:15px;letter-spacing:0.298px;color:#303942;right:304.70px;">2.2 KB</div>
<div class="t" style="top:378.17px;font-size:12.5px;line-height:15px;letter-spacing:0.749px;color:#303942;right:222.25px;">15 ms</div>
<div class="r" style="left:812.5px;top:380px;width:0.8px;height:11px;background:#d8d8d8;"></div>
<div class="r" style="left:813.3px;top:380px;width:2.2px;height:11px;background:#03a0f0;"></div>
<div class="fi" style="left:26px;top:399px"></div>
<svg class="r" style="left:26px;top:399px" width="12" height="15" viewBox="0 0 12 15"><path d="M2 3.4h2M5 3.4h4.8M2 5.4h4M7 5.4h2.8M2 7.4h2M5 7.4h4.8M2 9.4h5M8 9.4h1.8M2 11.4h3M6 11.4h1" stroke="#cdcdcd" stroke-width="1"/></svg>
<div class="t" style="top:399.17px;font-size:12.5px;line-height:15px;letter-spacing:0.572px;color:#303942;left:42.60px;">print.css</div>
<div class="t" style="top:399.17px;font-size:12.5px;line-height:15px;letter-spacing:0.850px;color:#303942;left:221.00px;">200</div>
<div class="t" style="top:399.17px;font-size:12.5px;line-height:15px;letter-spacing:0.850px;color:#303942;left:283.50px;">http/1.1</div>
<div class="t" style="top:399.17px;font-size:12.5px;line-height:15px;letter-spacing:0.535px;color:#303942;left:348.00px;">styl…</div>
<div class="t" style="top:399.17px;font-size:12.5px;line-height:15px;letter-spacing:0.672px;color:#303942;left:394.00px;text-decoration:underline;">(index)</div>
<div class="t" style="top:399.17px;font-size:12.5px;line-height:15px;letter-spacing:0.576px;color:#303942;right:304.42px;">970 B</div>
<div class="t" style="top:399.17px;font-size:12.5px;line-height:15px;letter-spacing:0.749px;color:#303942;right:222.25px;">10 ms</div>
<div class="r" style="left:812.5px;top:401px;width:0.8px;height:11px;background:#d8d8d8;"></div>
<div class="r" style="left:813.3px;top:401px;width:2.2px;height:11px;background:#03a0f0;"></div>
<div class="fi" style="left:26px;top:420px"></div>
<svg class="r" style="left:26px;top:420px" width="12" height="15" viewBox="0 0 12 15"><path d="M2 3.4h2M5 3.4h4.8M2 5.4h4M7 5.4h2.8M2 7.4h2M5 7.4h4.8M2 9.4h5M8 9.4h1.8M2 11.4h3M6 11.4h1" stroke="#cdcdcd" stroke-width="1"/></svg>
<div class="t" style="top:420.17px;font-size:12.5px;line-height:15px;letter-spacing:0.570px;color:#303942;left:42.60px;">jquery.mobile.custom.js</div>
<div class="t" style="top:420.17px;font-size:12.5px;line-height:15px;letter-spacing:0.850px;color:#303942;left:221.00px;">200</div>
<div class="t" style="top:420.17px;font-size:12.5px;line-height:15px;letter-spacing:0.850px;color:#303942;left:283.50px;">http/1.1</div>
<div class="t" style="top:420.17px;font-size:12.5px;line-height:15px;letter-spacing:0.715px;color:#303942;left:348.00px;">script</div>
<div class="t" style="top:420.17px;font-size:12.5px;line-height:15px;letter-spacing:0.572px;color:#303942;left:394.00px;text-decoration:underline;">require.js:1895</div>
<div class="t" style="top:420.17px;font-size:12.5px;line-height:15px;letter-spacing:0.298px;color:#303942;right:304.70px;">7.3 KB</div>
<div class="t" style="top:420.17px;font-size:12.5px;line-height:15px;letter-spacing:0.749px;color:#303942;right:222.25px;">20 ms</div>
<div class="r" style="left:813.8px;top:422px;width:0.8px;height:11px;background:#d8d8d8;"></div>
<div class="r" style="left:814.6px;top:422px;width:1.8px;height:11px;background:#03a0f0;"></div>
<div class="fi" style="left:26px;top:441px"></div>
<svg class="r" style="left:26px;top:441px" width="12" height="15" viewBox="0 0 12 15"><path d="M2 3.4h2M5 3.4h4.8M2 5.4h4M7 5.4h2.8M2 7.4h2M5 7.4h4.8M2 9.4h5M8 9.4h1.8M2 11.4h3M6 11.4h1" stroke="#cdcdcd" stroke-width="1"/></svg>
<div class="t" style="top:441.17px;font-size:12.5px;line-height:15px;letter-spacing:0.371px;color:#303942;left:42.60px;">dataPost.js</div>
<div class="t" style="top:441.17px;font-size:12.5px;line-height:15px;letter-spacing:0.850px;color:#303942;left:221.00px;">200</div>
<div class="t" style="top:441.17px;font-size:12.5px;line-height:15px;letter-spacing:0.850px;color:#303942;left:283.50px;">http/1.1</div>
<div class="t" style="top:441.17px;font-size:12.5px;line-height:15px;letter-spacing:0.715px;color:#303942;left:348.00px;">script</div>
<div class="t" style="top:441.17px;font-size:12.5px;line-height:15px;letter-spacing:0.572px;color:#303942;left:394.00px;text-decoration:underline;">require.js:1895</div>
<div class="t" style="top:441.17px;font-size:12.5px;line-height:15px;letter-spacing:0.298px;color:#303942;right:304.70px;">1.4 KB</div>
<div class="t" style="top:441.17px;font-size:12.5px;line-height:15px;letter-spacing:0.749px;color:#303942;right:222.25px;">12 ms</div>
<div class="r" style="left:813.8px;top:443px;width:0.8px;height:11px;background:#d8d8d8;"></div>
<div class="r" style="left:814.6px;top:443px;width:1.8px;height:11px;background:#03a0f0;"></div>
<div class="fi" style="left:26px;top:462px"></div>
<svg class="r" style="left:26px;top:462px" width="12" height="15" viewBox="0 0 12 15"><path d="M2 3.4h2M5 3.4h4.8M2 5.4h4M7 5.4h2.8M2 7.4h2M5 7.4h4.8M2 9.4h5M8 9.4h1.8M2 11.4h3M6 11.4h1" stroke="#cdcdcd" stroke-width="1"/></svg>
<div class="t" style="top:462.17px;font-size:12.5px;line-height:15px;letter-spacing:0.606px;color:#303942;left:42.60px;">bootstrap.js</div>
<div class="t" style="top:462.17px;font-size:12.5px;line-height:15px;letter-spacing:0.850px;color:#303942;left:221.00px;">200</div>
<div class="t" style="top:462.17px;font-size:12.5px;line-height:15px;letter-spacing:0.850px;color:#303942;left:283.50px;">http/1.1</div>
<div class="t" style="top:462.17px;font-size:12.5px;line-height:15px;letter-spacing:0.715px;color:#303942;left:348.00px;">script</div>
<div class="t" style="top:462.17px;font-size:12.5px;line-height:15px;letter-spacing:0.572px;color:#303942;left:394.00px;text-decoration:underline;">require.js:1895</div>
<div class="t" style="top:462.17px;font-size:12.5px;line-height:15px;letter-spacing:0.576px;color:#303942;right:304.42px;">721 B</div>
<div class="t" style="top:462.17px;font-size:12.5px;line-height:15px;letter-spacing:0.850px;color:#303942;right:222.15px;">11 ms</div>
<div class="r" style="left:813.8px;top:464px;width:0.8px;height:11px;background:#d8d8d8;"></div>
<div class="r" style="left:814.6px;top:464px;width:1.8px;height:11px;background:#03a0f0;"></div>
<div class="fi" style="left:26px;top:483px"></div>
<svg class="r" style="left:26px;top:483px" width="12" height="15" viewBox="0 0 12 15"><path d="M2 3.4h2M5 3.4h4.8M2 5.4h4M7 5.4h2.8M2 7.4h2M5 7.4h4.8M2 9.4h5M8 9.4h1.8M2 11.4h3M6 11.4h1" stroke="#cdcdcd" stroke-width="1"/></svg>
<div class="t" style="top:483.17px;font-size:12.5px;line-height:15px;letter-spacing:0.509px;color:#303942;left:42.60px;">jquery.js</div>
<div class="t" style="top:483.17px;font-size:12.5px;line-height:15px;letter-spacing:0.850px;color:#303942;left:221.00px;">200</div>
<div class="t" style="top:483.17px;font-size:12.5px;line-height:15px;letter-spacing:0.850px;color:#303942;left:283.50px;">http/1.1</div>
<div class="t" style="top:483.17px;font-size:12.5px;line-height:15px;letter-spacing:0.715px;color:#303942;left:348.00px;">script</div>
<div class="t" style="top:483.17px;font-size:12.5px;line-height:15px;letter-spacing:0.572px;color:#303942;left:394.00px;text-decoration:underline;">require.js:1895</div>
<div class="t" style="top:483.17px;font-size:12.5px;line-height:15px;letter-spacing:0.364px;color:#303942;right:304.64px;">87.1 KB</div>
<div class="t" style="top:483.17px;font-size:12.5px;line-height:15px;letter-spacing:0.749px;color:#303942;right:222.25px;">35 ms</div>
<div class="r" style="left:815.3px;top:485px;width:1.2px;height:11px;background:#03a0f0;"></div>
<div class="fi" style="left:26px;top:504px"></div>
<div class="t" style="top:504.17px;font-size:12.5px;line-height:15px;letter-spacing:0.542px;color:#303942;left:42.60px;">opensans-400.woff2</div>
<div class="t" style="top:504.17px;font-size:12.5px;line-height:15px;letter-spacing:0.850px;color:#303942;left:221.00px;">200</div>
<div class="t" style="top:504.17px;font-size:12.5px;line-height:15px;letter-spacing:0.850px;color:#303942;left:283.50px;">http/1.1</div>
<div class="t" style="top:504.17px;font-size:12.5px;line-height:15px;letter-spacing:0.850px;color:#303942;left:348.00px;">font</div>
<div class="t" style="top:504.17px;font-size:12.5px;line-height:15px;letter-spacing:0.672px;color:#303942;left:394.00px;text-decoration:underline;">(index)</div>
<div class="t" style="top:504.17px;font-size:12.5px;line-height:15px;letter-spacing:0.364px;color:#303942;right:304.64px;">17.8 KB</div>
<div class="t" style="top:504.17px;font-size:12.5px;line-height:15px;letter-spacing:0.749px;color:#303942;right:222.25px;">28 ms</div>
<div class="r" style="left:816px;top:506px;width:2px;height:11px;background:#03a0f0;"></div>
<div class="fi" style="left:26px;top:525px"></div>
<div class="t" style="top:525.17px;font-size:12.5px;line-height:15px;letter-spacing:0.484px;color:#303942;left:42.60px;">Luma-Icons.woff2</div>
<div class="t" style="top:525.17px;font-size:12.5px;line-height:15px;letter-spacing:0.850px;color:#303942;left:221.00px;">200</div>
<div class="t" style="top:525.17px;font-size:12.5px;line-height:15px;letter-spacing:0.850px;color:#303942;left:283.50px;">http/1.1</div>
<div class="t" style="top:525.17px;font-size:12.5px;line-height:15px;letter-spacing:0.850px;color:#303942;left:348.00px;">font</div>
<div class="t" style="top:525.17px;font-size:12.5px;line-height:15px;letter-spacing:0.672px;color:#303942;left:394.00px;text-decoration:underline;">(index)</div>
<div class="t" style="top:525.17px;font-size:12.5px;line-height:15px;letter-spacing:0.298px;color:#303942;right:304.70px;">3.6 KB</div>
<div class="t" style="top:525.17px;font-size:12.5px;line-height:15px;letter-spacing:0.749px;color:#303942;right:222.25px;">27 ms</div>
<div class="r" style="left:816px;top:527px;width:2px;height:11px;background:#03a0f0;"></div>
<div class="fi" style="left:26px;top:546px"></div>
<svg class="r" style="left:26px;top:546px" width="12" height="15" viewBox="0 0 12 15"><path d="M2 3.4h2M5 3.4h4.8M2 5.4h4M7 5.4h2.8M2 7.4h2M5 7.4h4.8M2 9.4h5M8 9.4h1.8M2 11.4h3M6 11.4h1" stroke="#cdcdcd" stroke-width="1"/></svg>
<div class="t" style="top:546.17px;font-size:12.5px;line-height:15px;letter-spacing:0.565px;color:#303942;left:42.60px;">translate-inline.js</div>
<div class="t" style="top:546.17px;font-size:12.5px;line-height:15px;letter-spacing:0.850px;color:#303942;left:221.00px;">200</div>
<div class="t" style="top:546.17px;font-size:12.5px;line-height:15px;letter-spacing:0.850px;color:#303942;left:283.50px;">http/1.1</div>
<div class="t" style="top:546.17px;font-size:12.5px;line-height:15px;letter-spacing:0.715px;color:#303942;left:348.00px;">script</div>
<div class="t" style="top:546.17px;font-size:12.5px;line-height:15px;letter-spacing:0.572px;color:#303942;left:394.00px;text-decoration:underline;">require.js:1895</div>
<div class="t" style="top:546.17px;font-size:12.5px;line-height:15px;letter-spacing:0.298px;color:#303942;right:304.70px;">2.1 KB</div>
<div class="t" style="top:546.17px;font-size:12.5px;line-height:15px;letter-spacing:0.768px;color:#303942;right:222.23px;">5 ms</div>
<div class="r" style="left:816px;top:548px;width:2px;height:11px;background:#03a0f0;"></div>
<div class="fi" style="left:26px;top:567px"></div>
<svg class="r" style="left:26px;top:567px" width="12" height="15" viewBox="0 0 12 15"><path d="M2 3.4h2M5 3.4h4.8M2 5.4h4M7 5.4h2.8M2 7.4h2M5 7.4h4.8M2 9.4h5M8 9.4h1.8M2 11.4h3M6 11.4h1" stroke="#cdcdcd" stroke-width="1"/></svg>
<div class="t" style="top:567.17px;font-size:12.5px;line-height:15px;letter-spacing:0.451px;color:#303942;left:42.60px;">responsive.js</div>
<div class="t" style="top:567.17px;font-size:12.5px;line-height:15px;letter-spacing:0.850px;color:#303942;left:221.00px;">200</div>
<div class="t" style="top:567.17px;font-size:12.5px;line-height:15px;letter-spacing:0.850px;color:#303942;left:283.50px;">http/1.1</div>
<div class="t" style="top:567.17px;font-size:12.5px;line-height:15px;letter-spacing:0.715px;color:#303942;left:348.00px;">script</div>
<div class="t" style="top:567.17px;font-size:12.5px;line-height:15px;letter-spacing:0.572px;color:#303942;left:394.00px;text-decoration:underline;">require.js:1895</div>
<div class="t" style="top:567.17px;font-size:12.5px;line-height:15px;letter-spacing:0.298px;color:#303942;right:304.70px;">1.2 KB</div>
<div class="t" style="top:567.17px;font-size:12.5px;line-height:15px;letter-spacing:0.768px;color:#303942;right:222.23px;">8 ms</div>
<div class="r" style="left:816px;top:569px;width:2px;height:11px;background:#03a0f0;"></div>
<div class="fi" style="left:26px;top:588px"></div>
<svg class="r" style="left:26px;top:588px" width="12" height="15" viewBox="0 0 12 15"><path d="M2 3.4h2M5 3.4h4.8M2 5.4h4M7 5.4h2.8M2 7.4h2M5 7.4h4.8M2 9.4h5M8 9.4h1.8M2 11.4h3M6 11.4h1" stroke="#cdcdcd" stroke-width="1"/></svg>
<div class="t" style="top:588.17px;font-size:12.5px;line-height:15px;letter-spacing:0.705px;color:#303942;left:42.60px;">theme.js</div>
<div class="t" style="top:588.17px;font-size:12.5px;line-height:15px;letter-spacing:0.850px;color:#303942;left:221.00px;">200</div>
<div class="t" style="top:588.17px;font-size:12.5px;line-height:15px;letter-spacing:0.850px;color:#303942;left:283.50px;">http/1.1</div>
<div class="t" style="top:588.17px;font-size:12.5px;line-height:15px;letter-spacing:0.715px;color:#303942;left:348.00px;">script</div>
<div class="t" style="top:588.17px;font-size:12.5px;line-height:15px;letter-spacing:0.572px;color:#303942;left:394.00px;text-decoration:underline;">require.js:1895</div>
<div class="t" style="top:588.17px;font-size:12.5px;line-height:15px;letter-spacing:0.576px;color:#303942;right:304.42px;">899 B</div>
<div class="t" style="top:588.17px;font-size:12.5px;line-height:15px;letter-spacing:0.768px;color:#303942;right:222.23px;">8 ms</div>
<div class="r" style="left:816px;top:590px;width:2px;height:11px;background:#03a0f0;"></div>
<div class="fi" style="left:26px;top:609px"></div>
<svg class="r" style="left:26px;top:609px" width="12" height="15" viewBox="0 0 12 15"><path d="M2 3.4h2M5 3.4h4.8M2 5.4h4M7 5.4h2.8M2 7.4h2M5 7.4h4.8M2 9.4h5M8 9.4h1.8M2 11.4h3M6 11.4h1" stroke="#cdcdcd" stroke-width="1"/></svg>
<div class="t" style="top:609.17px;font-size:12.5px;line-height:15px;letter-spacing:0.599px;color:#303942;left:42.60px;">translate.js</div>
<div class="t" style="top:609.17px;font-size:12.5px;line-height:15px;letter-spacing:0.850px;color:#303942;left:221.00px;">200</div>
<div class="t" style="top:609.17px;font-size:12.5px;line-height:15px;letter-spacing:0.850px;color:#303942;left:283.50px;">http/1.1</div>
<div class="t" style="top:609.17px;font-size:12.5px;line-height:15px;letter-spacing:0.715px;color:#303942;left:348.00px;">script</div>
<div class="t" style="top:609.17px;font-size:12.5px;line-height:15px;letter-spacing:0.572px;color:#303942;left:394.00px;text-decoration:underline;">require.js:1895</div>
<div class="t" style="top:609.17px;font-size:12.5px;line-height:15px;letter-spacing:0.298px;color:#303942;right:304.70px;">1.0 KB</div>
<div class="t" style="top:609.17px;font-size:12.5px;line-height:15px;letter-spacing:0.768px;color:#303942;right:222.23px;">8 ms</div>
<div class="r" style="left:816px;top:611px;width:2px;height:11px;background:#03a0f0;"></div>
<div class="fi" style="left:26px;top:630px"></div>
<div class="t" style="top:630.17px;font-size:12.5px;line-height:15px;letter-spacing:0.542px;color:#303942;left:42.60px;">opensans-300.woff2</div>
<div class="t" style="top:630.17px;font-size:12.5px;line-height:15px;letter-spacing:0.850px;color:#303942;left:221.00px;">200</div>
<div class="t" style="top:630.17px;font-size:12.5px;line-height:15px;letter-spacing:0.850px;color:#303942;left:283.50px;">http/1.1</div>
<div class="t" style="top:630.17px;font-size:12.5px;line-height:15px;letter-spacing:0.850px;color:#303942;left:348.00px;">font</div>
<div class="t" style="top:630.17px;font-size:12.5px;line-height:15px;letter-spacing:0.672px;color:#303942;left:394.00px;text-decoration:underline;">(index)</div>
<div class="t" style="top:630.17px;font-size:12.5px;line-height:15px;letter-spacing:0.364px;color:#303942;right:304.64px;">17.4 KB</div>
<div class="t" style="top:630.17px;font-size:12.5px;line-height:15px;letter-spacing:0.768px;color:#303942;right:222.23px;">3 ms</div>
<div class="r" style="left:816px;top:632px;width:2px;height:11px;background:#03a0f0;"></div>
<div class="fi" style="left:26px;top:651px"></div>
<svg class="r" style="left:26px;top:651px" width="12" height="15" viewBox="0 0 12 15"><path d="M2 3.4h2M5 3.4h4.8M2 5.4h4M7 5.4h2.8M2 7.4h2M5 7.4h4.8M2 9.4h5M8 9.4h1.8M2 11.4h3M6 11.4h1" stroke="#cdcdcd" stroke-width="1"/></svg>
<div class="t" style="top:651.17px;font-size:12.5px;line-height:15px;letter-spacing:0.670px;color:#303942;left:42.60px;">ip.html?ip=192.168.56.1…</div>
<div class="t" style="top:651.17px;font-size:12.5px;line-height:15px;letter-spacing:0.850px;color:#8a8a8a;left:221.00px;">200</div>
<div class="t" style="top:651.17px;font-size:12.5px;line-height:15px;letter-spacing:0.536px;color:#303942;left:283.50px;">chrom…</div>
<div class="t" style="top:651.17px;font-size:12.5px;line-height:15px;letter-spacing:0.303px;color:#303942;left:348.00px;">doc…</div>
<div class="t" style="top:651.17px;font-size:12.5px;line-height:15px;letter-spacing:0.602px;color:#303942;left:394.00px;text-decoration:underline;">inject.js:29</div>
<div class="t" style="top:651.17px;font-size:12.5px;line-height:15px;letter-spacing:0.377px;color:#8a8a8a;right:304.62px;">(disk c…</div>
<div class="t" style="top:651.17px;font-size:12.5px;line-height:15px;letter-spacing:0.749px;color:#303942;right:222.25px;">32 ms</div>
<div class="r" style="left:816px;top:653px;width:2px;height:11px;background:#03a0f0;"></div>
<div class="fi" style="left:26px;top:672px"></div>
<div class="t" style="top:672.17px;font-size:12.5px;line-height:15px;letter-spacing:0.542px;color:#303942;left:42.60px;">opensans-600.woff2</div>
<div class="t" style="top:672.17px;font-size:12.5px;line-height:15px;letter-spacing:0.850px;color:#303942;left:221.00px;">200</div>
<div class="t" style="top:672.17px;font-size:12.5px;line-height:15px;letter-spacing:0.850px;color:#303942;left:283.50px;">http/1.1</div>
<div class="t" style="top:672.17px;font-size:12.5px;line-height:15px;letter-spacing:0.850px;color:#303942;left:348.00px;">font</div>
<div class="t" style="top:672.17px;font-size:12.5px;line-height:15px;letter-spacing:0.672px;color:#303942;left:394.00px;text-decoration:underline;">(index)</div>
<div class="t" style="top:672.17px;font-size:12.5px;line-height:15px;letter-spacing:0.364px;color:#303942;right:304.64px;">17.9 KB</div>
<div class="t" style="top:672.17px;font-size:12.5px;line-height:15px;letter-spacing:0.768px;color:#303942;right:222.23px;">1 ms</div>
<div class="r" style="left:816px;top:674px;width:2px;height:11px;background:#03a0f0;"></div>
<div class="r" style="left:816px;top:207px;width:2px;height:472px;background:rgba(30,110,220,.55);"></div>
<div class="r" style="left:827px;top:207px;width:2px;height:472px;background:rgba(200,60,60,.6);"></div>
</div>
<div class="r" style="left:21px;top:679px;width:824px;height:1px;background:#cbcbcb;"></div>
<div class="r" style="left:21px;top:680px;width:824px;height:25px;background:#f3f3f3;"></div>
<div class="t" style="top:686.17px;font-size:12.5px;line-height:15px;letter-spacing:0.578px;color:#5a5a5a;left:30.00px;">200 requests</div>
<div class="r" style="left:118px;top:685px;width:1px;height:16px;background:#cfcfcf;"></div>
<div class="t" style="top:686.17px;font-size:12.5px;line-height:15px;letter-spacing:0.518px;color:#5a5a5a;left:127.80px;">1002 KB transferred</div>
<div class="r" style="left:258px;top:685px;width:1px;height:16px;background:#cfcfcf;"></div>
<div class="t" style="top:686.17px;font-size:12.5px;line-height:15px;letter-spacing:0.369px;color:#5a5a5a;left:267.80px;">3.1 MB resources</div>
<div class="r" style="left:381px;top:685px;width:1px;height:16px;background:#cfcfcf;"></div>
<div class="t" style="top:686.17px;font-size:12.5px;line-height:15px;letter-spacing:0.344px;color:#5a5a5a;left:390.00px;">Finish: 7.49 s</div>
<div class="r" style="left:478px;top:685px;width:1px;height:16px;background:#cfcfcf;"></div>
<div class="t" style="top:686.17px;font-size:12.5px;line-height:15px;letter-spacing:0.418px;color:#1a5fc8;left:488.00px;">DOMContentLoaded: 6.41 s</div>
<div class="r" style="left:663px;top:685px;width:1px;height:16px;background:#cfcfcf;"></div>
<div class="t" style="top:686.17px;font-size:12.5px;line-height:15px;letter-spacing:0.425px;color:#b92b27;left:671.60px;">Load: 6.84 s</div></body></html>
